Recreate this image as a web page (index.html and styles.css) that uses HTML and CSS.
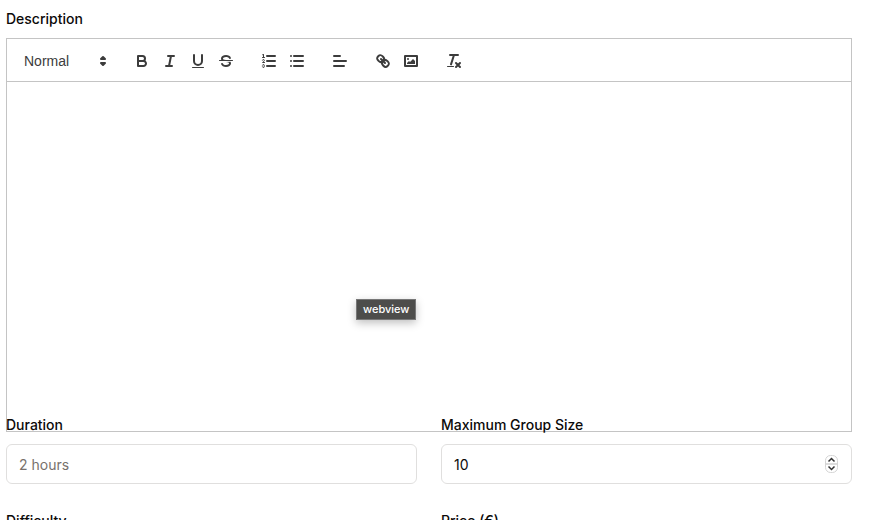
FILE: index.html
```html
<!DOCTYPE html>
<html lang="en">
<head>
<meta charset="utf-8">
<meta name="viewport" content="width=device-width, initial-scale=1">
<title>Activity</title>
<link rel="stylesheet" href="styles.css">
</head>
<body>
<form class="form">
  <div class="field">
    <label class="label" for="description">Description</label>
    <div class="editor">
      <div class="toolbar">
        <div class="picker">
          <select class="picker-select" aria-label="Heading"><option>Normal</option></select>
          <svg class="icon picker-icon" viewBox="0 0 18 18"><polygon class="fill line" points="7 11 9 13 11 11 7 11"/><polygon class="fill line" points="7 7 9 5 11 7 7 7"/></svg>
        </div>
        <div class="group">
          <button class="tool" type="button" aria-label="Bold"><svg class="icon" viewBox="0 0 18 18"><path class="line" d="M5,4H9.5A2.5,2.5,0,0,1,12,6.5v0A2.5,2.5,0,0,1,9.5,9H5A0,0,0,0,1,5,9V4A0,0,0,0,1,5,4Z"/><path class="line" d="M5,9h5.5A2.5,2.5,0,0,1,13,11.5v0A2.5,2.5,0,0,1,10.5,14H5a0,0,0,0,1,0,0V9A0,0,0,0,1,5,9Z"/></svg></button>
          <button class="tool" type="button" aria-label="Italic"><svg class="icon" viewBox="0 0 18 18"><path class="line" d="M7 4H13M5 14H11M8 14L10 4"/></svg></button>
          <button class="tool" type="button" aria-label="Underline"><svg class="icon" viewBox="0 0 18 18"><path class="line" d="M5,3V9a4.012,4.012,0,0,0,4,4H9a4.012,4.012,0,0,0,4-4V3"/><rect class="fill" height="1" rx="0.5" ry="0.5" width="12" x="3" y="15"/></svg></button>
          <button class="tool" type="button" aria-label="Strikethrough"><svg class="icon" viewBox="0 0 18 18"><path class="line thin" d="M15.5 8.5H2.5"/><path class="fill" d="M9.007,8C6.542,7.791,6,7.519,6,6.5,6,5.792,7.283,5,9,5c1.571,0,2.765.679,2.969,1.309a1,1,0,0,0,1.9-.617C13.356,4.106,11.354,3,9,3,6.2,3,4,4.538,4,6.5a3.2,3.2,0,0,0,.5,1.843Z"/><path class="fill" d="M8.984,10C11.457,10.208,12,10.479,12,11.5c0,0.708-1.283,1.5-3,1.5-1.571,0-2.765-.679-2.969-1.309a1,1,0,1,0-1.9.617C4.644,13.894,6.646,15,9,15c2.8,0,5-1.538,5-3.5a3.2,3.2,0,0,0-.5-1.843Z"/></svg></button>
        </div>
        <div class="group">
          <button class="tool" type="button" aria-label="Numbered list"><svg class="icon" viewBox="0 0 18 18"><path class="line" d="M7 4H15M7 9H15M7 14H15"/><path class="line thin" d="M2.5 5.5H4.5"/><path class="fill" d="M3.5,6A0.5,0.5,0,0,1,3,5.5V3.085l-0.276.138A0.5,0.5,0,0,1,2.053,3c-0.124-.247-0.023-0.324.224-0.447l1-.5A0.5,0.5,0,0,1,4,2.5v3A0.5,0.5,0,0,1,3.5,6Z"/><path class="line thin" d="M4.5,10.5h-2c0-.234,1.85-1.076,1.85-2.234A0.959,0.959,0,0,0,2.5,8.156"/><path class="line thin" d="M2.5,14.846a0.959,0.959,0,0,0,1.85-.109A0.7,0.7,0,0,0,3.75,14a0.688,0.688,0,0,0,.6-0.736,0.959,0.959,0,0,0-1.85-.109"/></svg></button>
          <button class="tool" type="button" aria-label="Bulleted list"><svg class="icon" viewBox="0 0 18 18"><path class="line" d="M6 4H15M6 9H15M6 14H15M3 4H3M3 9H3M3 14H3"/></svg></button>
        </div>
        <div class="group">
          <button class="tool" type="button" aria-label="Align"><svg class="icon" viewBox="0 0 18 18"><path class="line" d="M3 9H15M3 14H13M3 4H9"/></svg></button>
        </div>
        <div class="group">
          <button class="tool" type="button" aria-label="Link"><svg class="icon" viewBox="0 0 18 18"><path class="line" d="M7 7L11 11"/><path class="line" d="M8.9,4.577a3.476,3.476,0,0,1,.36,4.679A3.476,3.476,0,0,1,4.577,8.9C3.185,7.5,2.035,6.4,4.217,4.217S7.5,3.185,8.9,4.577Z"/><path class="line" d="M13.423,9.1a3.476,3.476,0,0,0-4.679-.36,3.476,3.476,0,0,0,.36,4.679c1.392,1.392,2.5,2.542,4.679.36S14.815,10.5,13.423,9.1Z"/></svg></button>
          <button class="tool" type="button" aria-label="Image"><svg class="icon" viewBox="0 0 18 18"><rect class="line" height="10" width="12" x="3" y="4"/><circle class="fill" cx="6" cy="7" r="1"/><polyline class="fill" points="5 12 5 11 7 9 8 10 11 7 13 9 13 12 5 12"/></svg></button>
        </div>
        <div class="group">
          <button class="tool" type="button" aria-label="Clear formatting"><svg class="icon" viewBox="0 0 18 18"><path class="line" d="M5 3H13M6 12.35L9 3M11 11L15 15M15 11L11 15"/><rect class="fill" height="1" rx="0.5" ry="0.5" width="7" x="2" y="14"/></svg></button>
        </div>
      </div>
      <div class="canvas">
        <textarea class="text" id="description"></textarea>
        <div class="tooltip" role="tooltip">webview</div>
      </div>
    </div>
  </div>
  <div class="columns">
    <div class="field">
      <label class="label" for="duration">Duration</label>
      <input class="input" id="duration" type="text" placeholder="2 hours">
    </div>
    <div class="field">
      <label class="label" for="size">Maximum Group Size</label>
      <div class="number">
        <input class="input" id="size" type="number" value="10">
        <svg class="stepper" viewBox="0 0 13 20"><rect class="stepper-box" x="0.5" y="1.5" width="12" height="17" rx="5"/><path class="stepper-split" d="M1 10H12"/><path class="stepper-arrow" d="M3.5 7.5L6.5 4.5L9.5 7.5M3.5 12.5L6.5 15.5L9.5 12.5"/></svg>
      </div>
    </div>
    <div class="field">
      <label class="label" for="difficulty">Difficulty</label>
      <input class="input" id="difficulty" type="text">
    </div>
    <div class="field">
      <label class="label" for="price">Price (€)</label>
      <input class="input" id="price" type="number">
    </div>
  </div>
</form>
</body>
</html>
```
FILE: styles.css
```css
* { box-sizing: border-box; }

html { overflow: hidden; }

body {
  margin: 0;
  background: #fff;
  color: #0c0a09;
  font: 14px/24px Inter, "Liberation Sans", sans-serif;
}

.form {
  display: flex;
  flex-direction: column;
  gap: 24px;
  padding: 7px 22px 24px 6px;
}

.field {
  display: flex;
  flex-direction: column;
  gap: 7px;
  min-width: 0;
}

.label {
  position: relative;
  z-index: 1;
  font-weight: 500;
}

/* The toolbar adds to the editor height, so the canvas runs past this box. */
.editor {
  height: 351px;
}

.toolbar {
  display: flex;
  gap: 15px;
  padding: 10px 8px 8px;
  border: 1px solid #c4c4c4;
}

.group { display: flex; }

.tool {
  width: 28px;
  height: 24px;
  padding: 3px 5px;
  border: 0;
  background: none;
}

.icon {
  display: block;
  width: 18px;
  height: 18px;
}

.line {
  fill: none;
  stroke: #3c3c3c;
  stroke-width: 2;
  stroke-linecap: round;
  stroke-linejoin: round;
}

.fill { fill: #3c3c3c; }
.thin { stroke-width: 1; }

.picker {
  position: relative;
  width: 98px;
}

.picker-select {
  width: 100%;
  height: 24px;
  padding: 0 9px;
  border: 0;
  appearance: none;
  background: none;
  color: #3c3c3c;
  font: 500 14px/24px "Liberation Sans", Arial, sans-serif;
}

.picker-icon {
  position: absolute;
  top: 3px;
  right: 1px;
  pointer-events: none;
}

.canvas {
  position: relative;
  height: 350px;
  border: 1px solid #c4c4c4;
  border-top: 0;
}

.text {
  display: block;
  width: 100%;
  height: 100%;
  padding: 12px 15px;
  border: 0;
  outline: 0;
  resize: none;
  background: none;
  font: 13px/18px "Liberation Sans", Arial, sans-serif;
}

.tooltip {
  position: absolute;
  top: 217px;
  left: 349px;
  padding: 0 6px;
  border: 1px solid #777;
  background: #4d4d4b;
  box-shadow: 0 3px 8px rgb(0 0 0 / 25%);
  color: #fff;
  font-size: 11px;
  font-weight: 500;
  line-height: 19px;
}

.columns {
  display: grid;
  grid-template-columns: 1fr 1fr;
  gap: 25px 24px;
}

.input {
  width: 100%;
  height: 40px;
  padding: 8px 12px;
  border: 1px solid #e0dfde;
  border-radius: 6px;
  background: #fff;
  color: #0c0a09;
  font: 14px/20px Inter, "Liberation Sans", sans-serif;
  appearance: textfield;
}

.input::placeholder { color: #78716c; }

.number {
  position: relative;
  display: flex;
}

.stepper {
  position: absolute;
  top: 10px;
  right: 14px;
  width: 13px;
  height: 20px;
  pointer-events: none;
}

.stepper-box { fill: #fff; stroke: #d5d5d5; }
.stepper-split { stroke: #ddd; stroke-width: 2; }
.stepper-arrow { fill: none; stroke: #333; stroke-width: 1.5; }
```
